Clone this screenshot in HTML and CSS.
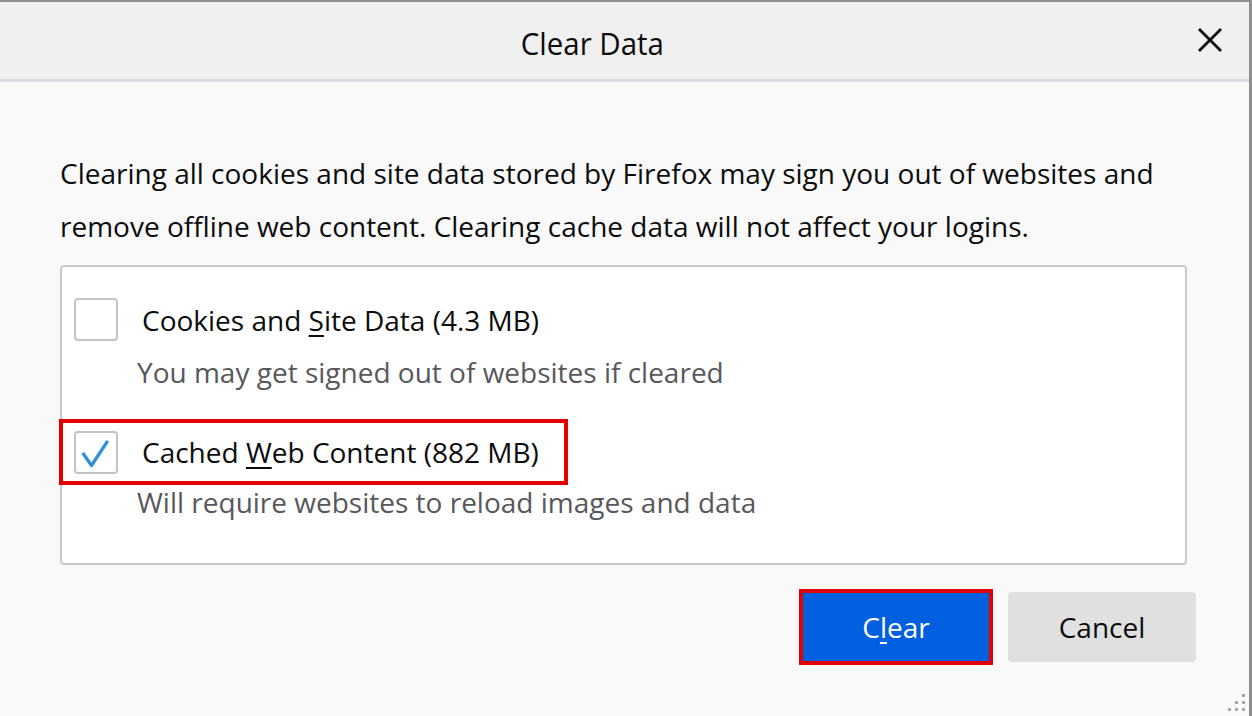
FILE: index.html
```html
<!DOCTYPE html>
<html lang="en">
<head>
<meta charset="utf-8">
<title>Clear Data</title>
<link rel="stylesheet" href="styles.css">
</head>
<body>
<div class="window">
  <header class="titlebar">
    <h1 class="title"><span class="title-text">Clear Data</span></h1>
    <button class="close" aria-label="Close">
      <svg width="24" height="24" viewBox="0 0 24 24"><path d="M2 2 L22 22 M22 2 L2 22" stroke="#0c0c0d" stroke-width="2.8" fill="none" stroke-linecap="square"/></svg>
    </button>
  </header>
  <main class="content">
    <p class="intro">Clearing all cookies and site data stored by Firefox may sign you out of websites and remove offline web content. Clearing cache data will not affect your logins.</p>
    <section class="options">
      <div class="option">
        <span class="checkbox"></span>
        <span class="label">Cookies and <u>S</u>ite Data (4.3 MB)</span>
      </div>
      <div class="desc">You may get signed out of websites if cleared</div>
      <div class="option highlight">
        <span class="checkbox checked">
          <svg width="44" height="43" viewBox="0 0 44 43"><path d="M9.5 23 L17.5 34.5 L33 11" stroke="#2f8fd8" stroke-width="3.2" fill="none" stroke-linecap="round" stroke-linejoin="round"/></svg>
        </span>
        <span class="label">Cached <u>W</u>eb Content (882 MB)</span>
      </div>
      <div class="desc desc-2">Will require websites to reload images and data</div>
    </section>
    <div class="buttons">
      <button class="btn primary">C<u>l</u>ear</button>
      <button class="btn">Cancel</button>
    </div>
  </main>
  <div class="grip">
    <span></span><span></span><span></span><span></span><span></span><span></span>
  </div>
</div>
</body>
</html>
```
FILE: styles.css
```css
* { box-sizing: border-box; }
html, body { margin: 0; padding: 0; }
body {
  width: 1252px;
  height: 716px;
  overflow: hidden;
  background: #f9f9f9;
  font-family: "Open Sans", "Noto Sans", sans-serif;
  color: #0c0c0d;
}
.window {
  position: relative;
  width: 1252px;
  height: 716px;
  border-top: 2px solid #8e8e8e;
  border-right: 3px solid #8e8e8e;
  background: #f9f9f9;
  display: flex;
  flex-direction: column;
}
.titlebar {
  height: 80px;
  flex: none;
  background: #f0f0f0;
  border-bottom: 3px solid #dcdce0;
  display: flex;
  align-items: center;
  padding-right: 27px;
}
.title {
  flex: 1;
  margin: 0 14px 0 0;
  text-align: center;
  font-weight: 400;
  font-size: 31px;
  padding-top: 4px;
}
.title-text {
  display: inline-block;
  transform: scaleX(0.95);
}
.close {
  width: 24px;
  height: 24px;
  padding: 0;
  border: 0;
  background: transparent;
  display: flex;
  margin-top: -1px;
}
.content {
  flex: 1;
  padding: 0 62px 0 60px;
  display: flex;
  flex-direction: column;
}
.intro {
  margin: 65px 0 0;
  font-size: 28px;
  line-height: 53px;
}
.options {
  margin-top: 12px;
  height: 300px;
  background: #fff;
  border: 2px solid #c9c9c9;
  border-radius: 4px;
  padding: 31px 12px 0 12px;
  display: flex;
  flex-direction: column;
  align-items: flex-start;
}
.option {
  display: flex;
  align-items: center;
  gap: 24px;
  font-size: 28px;
}
.checkbox {
  width: 44px;
  height: 43px;
  flex: none;
  border: 2px solid #c4c4c4;
  border-radius: 4px;
  background: #fff;
  display: flex;
  align-items: center;
  justify-content: center;
  position: relative;
}
.checkbox svg { position: absolute; left: -2px; top: -2px; }
.label { line-height: 36px; }
.label u { text-decoration-thickness: 2px; text-underline-offset: 4px; }
.desc {
  margin: 13px 0 0 63px;
  font-size: 28px;
  line-height: 36px;
  color: #58585c;
}
.highlight {
  margin-top: 29px;
  margin-left: -15px;
  height: 66px;
  border: 4px solid #e20000;
  padding: 0 25px 0 11px;
}
.desc-2 { margin-top: -1px; }
.buttons {
  margin-top: 27px;
  margin-right: -9px;
  display: flex;
  justify-content: flex-end;
  gap: 18px;
}
.btn {
  width: 188px;
  height: 70px;
  border: 0;
  border-radius: 4px;
  background: #e0e0e1;
  color: #0c0c0d;
  font-family: inherit;
  font-size: 28px;
  padding: 0;
}
.btn.primary {
  background: #0060df;
  color: #fff;
  border-radius: 0;
  outline: 4px solid #e20000;
  outline-offset: -1px;
}
.btn u { text-decoration-thickness: 2px; text-underline-offset: 4px; }
.grip {
  position: absolute;
  right: 3px;
  bottom: 4px;
  width: 18px;
  height: 18px;
  display: grid;
  grid-template-columns: repeat(3, 3px);
  grid-template-rows: repeat(3, 3px);
  gap: 4px;
}
.grip span {
  background: #a0a0a0;
  border-radius: 1px;
}
.grip span:nth-child(1) { grid-column: 3; grid-row: 1; }
.grip span:nth-child(2) { grid-column: 2; grid-row: 2; }
.grip span:nth-child(3) { grid-column: 3; grid-row: 2; }
.grip span:nth-child(4) { grid-column: 1; grid-row: 3; }
.grip span:nth-child(5) { grid-column: 2; grid-row: 3; }
.grip span:nth-child(6) { grid-column: 3; grid-row: 3; }
```
